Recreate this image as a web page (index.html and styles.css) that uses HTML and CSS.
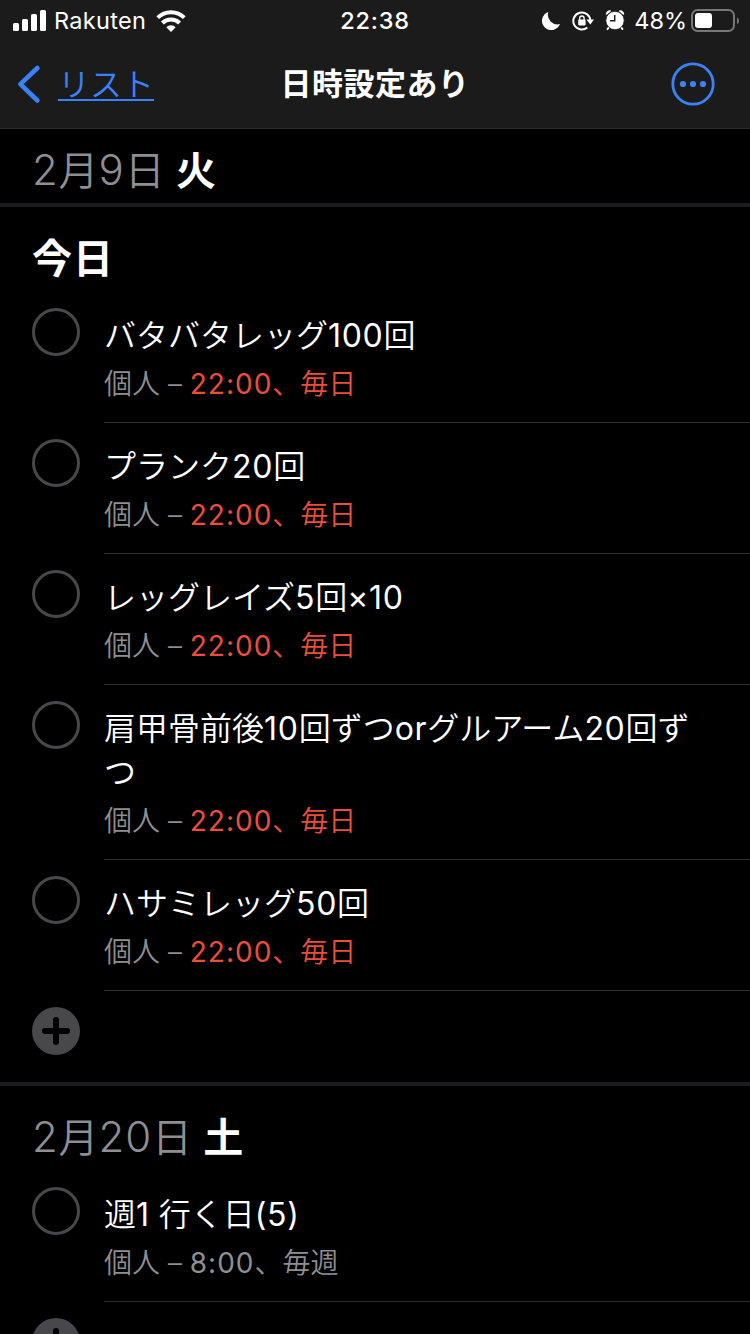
FILE: index.html
```html
<!DOCTYPE html>
<html lang="ja">
<head>
    <meta charset="UTF-8">
    <meta name="viewport" content="width=device-width, initial-scale=1.0">
    <title>日時設定あり</title>
    <link rel="stylesheet" href="styles.css">
</head>
<body>

    <header class="top">
        <div class="status">
            <div class="status-left">
                <svg class="signal" width="34" height="22" viewBox="0 0 34 22" fill="#fff">
                    <rect x="0" y="13" width="6" height="8" rx="1.6"/>
                    <rect x="9" y="9" width="6" height="12" rx="1.6"/>
                    <rect x="18" y="4" width="6" height="17" rx="1.6"/>
                    <rect x="27" y="0" width="6" height="21" rx="1.6"/>
                </svg>
                <span class="carrier">Rakuten</span>
                <svg class="wifi" width="30" height="22" viewBox="0 0 30 22" fill="none" stroke="#fff" stroke-width="4">
                    <path d="M1.7 7.6a19 19 0 0 1 26.6 0"/>
                    <path d="M6.4 13a12.2 12.2 0 0 1 17.2 0"/>
                    <path d="M10.3 17.2a6.6 6.6 0 0 1 9.4 0L15 22z" fill="#fff" stroke="none"/>
                </svg>
            </div>
            <div class="clock">22:38</div>
            <div class="status-right">
                <svg class="moon" width="20" height="20" viewBox="0 0 20 20" fill="#fff">
                    <path d="M7.3 1A9.3 9.3 0 1 0 19 13 9.6 9.6 0 0 1 7.3 1z"/>
                </svg>
                <svg class="lock" width="22" height="20" viewBox="0 0 22 20">
                    <path d="M18.3 10a8.5 8.5 0 1 0-3 6.5" fill="none" stroke="#fff" stroke-width="2"/>
                    <path d="M14.4 8.6H22l-3.7 5z" fill="#fff"/>
                    <rect x="6.2" y="8.6" width="7.4" height="5.8" rx=".8" fill="#fff"/>
                    <path d="M7.7 9V7.2a2.2 2.2 0 0 1 4.4 0V9" fill="none" stroke="#fff" stroke-width="1.3"/>
                </svg>
                <svg class="alarm" width="20" height="20" viewBox="0 0 20 20">
                    <path d="M1.6 4A3.3 3.3 0 0 1 5.2 1zM18.4 4A3.3 3.3 0 0 0 14.8 1z" fill="#fff" stroke="#fff" stroke-width="1.6" stroke-linejoin="round"/>
                    <path d="M4.5 16.5 2.6 19M15.5 16.5l1.9 2.5" stroke="#fff" stroke-width="2" stroke-linecap="round"/>
                    <circle cx="10" cy="10.5" r="9.2" fill="#fff" stroke="#1b1b1b" stroke-width=".8"/>
                    <path d="M9.7 5v5.7H5" fill="none" stroke="#1b1b1b" stroke-width="1.5"/>
                </svg>
                <span class="percent">48%</span>
                <svg class="battery" width="48" height="24" viewBox="0 0 48 24">
                    <rect x="1" y="1" width="42" height="21" rx="5.5" fill="none" stroke="#777" stroke-width="2"/>
                    <rect x="4" y="4" width="17" height="15" rx="3" fill="#fff"/>
                    <path d="M46 8.5c2.7 1.2 2.7 5.3 0 6.5z" fill="#777"/>
                </svg>
            </div>
        </div>
        <nav class="nav">
            <a class="back" href="#">
                <svg width="24" height="40" viewBox="0 0 24 40" fill="none" stroke="#3a82f7" stroke-width="4.6" stroke-linecap="round" stroke-linejoin="round">
                    <path d="M20.4 4 3.4 20.2 20.4 36.5"/>
                </svg>
                <span class="back-label">リスト</span>
            </a>
            <h1 class="title">日時設定あり</h1>
            <svg class="more" width="44" height="44" viewBox="0 0 44 44">
                <circle cx="22" cy="22" r="20.2" fill="none" stroke="#3a82f7" stroke-width="2.8"/>
                <g fill="#3a82f7">
                    <circle cx="12" cy="22" r="3.1"/>
                    <circle cx="22" cy="22" r="3.1"/>
                    <circle cx="32" cy="22" r="3.1"/>
                </g>
            </svg>
        </nav>
    </header>

    <main>
        <section class="day day-first">
            <h2 class="date"><span class="num">2</span>月<span class="num">9</span>日 <b>火</b></h2>
        </section>

        <section class="day">
            <h2 class="today">今日</h2>
            <ul class="list">
                <li class="item">
                    <span class="check"></span>
                    <div class="body">
                        <p class="name">バタバタレッグ<span class="num">100</span>回</p>
                        <p class="meta">個人 – <span class="late"><span class="num">22:00</span>、毎日</span></p>
                    </div>
                </li>
                <li class="item">
                    <span class="check"></span>
                    <div class="body">
                        <p class="name">プランク<span class="num">20</span>回</p>
                        <p class="meta">個人 – <span class="late"><span class="num">22:00</span>、毎日</span></p>
                    </div>
                </li>
                <li class="item">
                    <span class="check"></span>
                    <div class="body">
                        <p class="name">レッグレイズ<span class="num">5</span>回<span class="num">×10</span></p>
                        <p class="meta">個人 – <span class="late"><span class="num">22:00</span>、毎日</span></p>
                    </div>
                </li>
                <li class="item">
                    <span class="check"></span>
                    <div class="body">
                        <p class="name">肩甲骨前後<span class="num">10</span>回ずつ<span class="num">or</span>グルアーム<span class="num">20</span>回ず<br>つ</p>
                        <p class="meta">個人 – <span class="late"><span class="num">22:00</span>、毎日</span></p>
                    </div>
                </li>
                <li class="item">
                    <span class="check"></span>
                    <div class="body">
                        <p class="name">ハサミレッグ<span class="num">50</span>回</p>
                        <p class="meta">個人 – <span class="late"><span class="num">22:00</span>、毎日</span></p>
                    </div>
                </li>
            </ul>
            <div class="add">
                <svg width="48" height="48" viewBox="0 0 48 48">
                    <circle cx="24" cy="24" r="24" fill="#48484b"/>
                    <path d="M24 13v22M13 24h22" stroke="#000" stroke-width="6" stroke-linecap="round"/>
                </svg>
            </div>
        </section>

        <section class="day">
            <h2 class="date date-next"><span class="num">2</span>月<span class="num">20</span>日 <b>土</b></h2>
            <ul class="list">
                <li class="item">
                    <span class="check"></span>
                    <div class="body">
                        <p class="name">週<span class="num">1</span> 行く日<span class="num">(5)</span></p>
                        <p class="meta">個人 – <span class="num">8:00</span>、毎週</p>
                    </div>
                </li>
            </ul>
            <div class="add">
                <svg width="48" height="48" viewBox="0 0 48 48">
                    <circle cx="24" cy="24" r="24" fill="#48484b"/>
                    <path d="M24 13v22M13 24h22" stroke="#000" stroke-width="6" stroke-linecap="round"/>
                </svg>
            </div>
        </section>
    </main>

</body>
</html>
```
FILE: styles.css
```css
* {
    box-sizing: border-box;
    margin: 0;
    padding: 0;
}
body {
    width: 750px;
    height: 1334px;
    overflow: hidden;
    background: #000;
    color: #fff;
    font-family: Inter, "Noto Sans CJK JP", sans-serif;
}
svg {
    display: block;
    flex: none;
}
.top {
    height: 129px;
    background: #1b1b1b;
    border-bottom: 1px solid #2a2a2a;
}

/* status bar */
.status {
    display: grid;
    grid-template-columns: 1fr auto 1fr;
    align-items: center;
    height: 40px;
    padding: 0 11px 0 13px;
    font-size: 23.5px;
    line-height: 42px;
}
.status-left,
.status-right {
    display: flex;
    align-items: center;
}
.status-right {
    justify-content: flex-end;
}
.signal {
    margin-top: -1px;
}
.carrier {
    margin-left: 7px;
    letter-spacing: 0.3px;
}
.wifi {
    margin-left: 10px;
    margin-top: -1px;
}
.clock {
    margin-left: -2px;
    font-weight: 500;
    letter-spacing: 0.8px;
}
.lock {
    margin-left: 11px;
}
.alarm {
    margin-left: 11px;
    margin-top: -2px;
}
.percent {
    margin-left: 9px;
}
.battery {
    margin-left: 4px;
    margin-top: -1px;
}

/* navigation bar */
.nav {
    display: grid;
    grid-template-columns: 1fr auto 1fr;
    align-items: center;
    height: 88px;
    padding: 0 18px;
}
.back {
    display: flex;
    align-items: center;
    margin-left: -1px;
    color: #3a82f7;
    text-decoration: none;
}
.back-label {
    height: 34px;
    margin-left: 17px;
    border-bottom: 2px solid #3a82f7;
    font-size: 32px;
    font-weight: 350;
    line-height: 35px;
}
.title {
    font-size: 31px;
    font-weight: 700;
    letter-spacing: 0.5px;
    line-height: 46px;
}
.more {
    justify-self: end;
    margin-right: 17.5px;
}

/* date sections */
.day {
    border-bottom: 4px solid #1c1c1e;
}
.day-first {
    height: 78px;
}
.date {
    padding-left: 32px;
    color: #8e8e93;
    font-size: 40px;
    font-weight: 350;
    line-height: 81px;
}
.date b {
    color: #fff;
    font-weight: 700;
}
.date .num {
    font-size: 42px;
    letter-spacing: 0.8px;
}
.date-next {
    height: 85px;
    line-height: 102px;
}
.today {
    height: 85px;
    padding-left: 32px;
    font-size: 40px;
    font-weight: 700;
    letter-spacing: 1px;
    line-height: 104px;
}

/* reminders */
.list {
    list-style: none;
}
.item {
    display: flex;
    padding-left: 32px;
}
.check {
    flex: none;
    width: 48px;
    height: 48px;
    margin: 16px 24px 0 0;
    border: 3px solid #48484b;
    border-radius: 50%;
}
.body {
    flex: 1;
    padding: 22px 0 20px;
    border-bottom: 1px solid #303032;
}
.name {
    font-size: 32px;
    font-weight: 350;
    line-height: 44px;
    white-space: nowrap;
}
.meta {
    margin-top: 8px;
    color: #8e8e93;
    font-size: 28px;
    font-weight: 350;
    line-height: 36px;
}
.name .num {
    font-weight: 400;
    letter-spacing: 0.7px;
}
.meta .num {
    font-weight: 400;
    letter-spacing: 1px;
}
.late {
    color: #eb4e3d;
}
.add {
    padding: 16px 32px 27px;
}
```
